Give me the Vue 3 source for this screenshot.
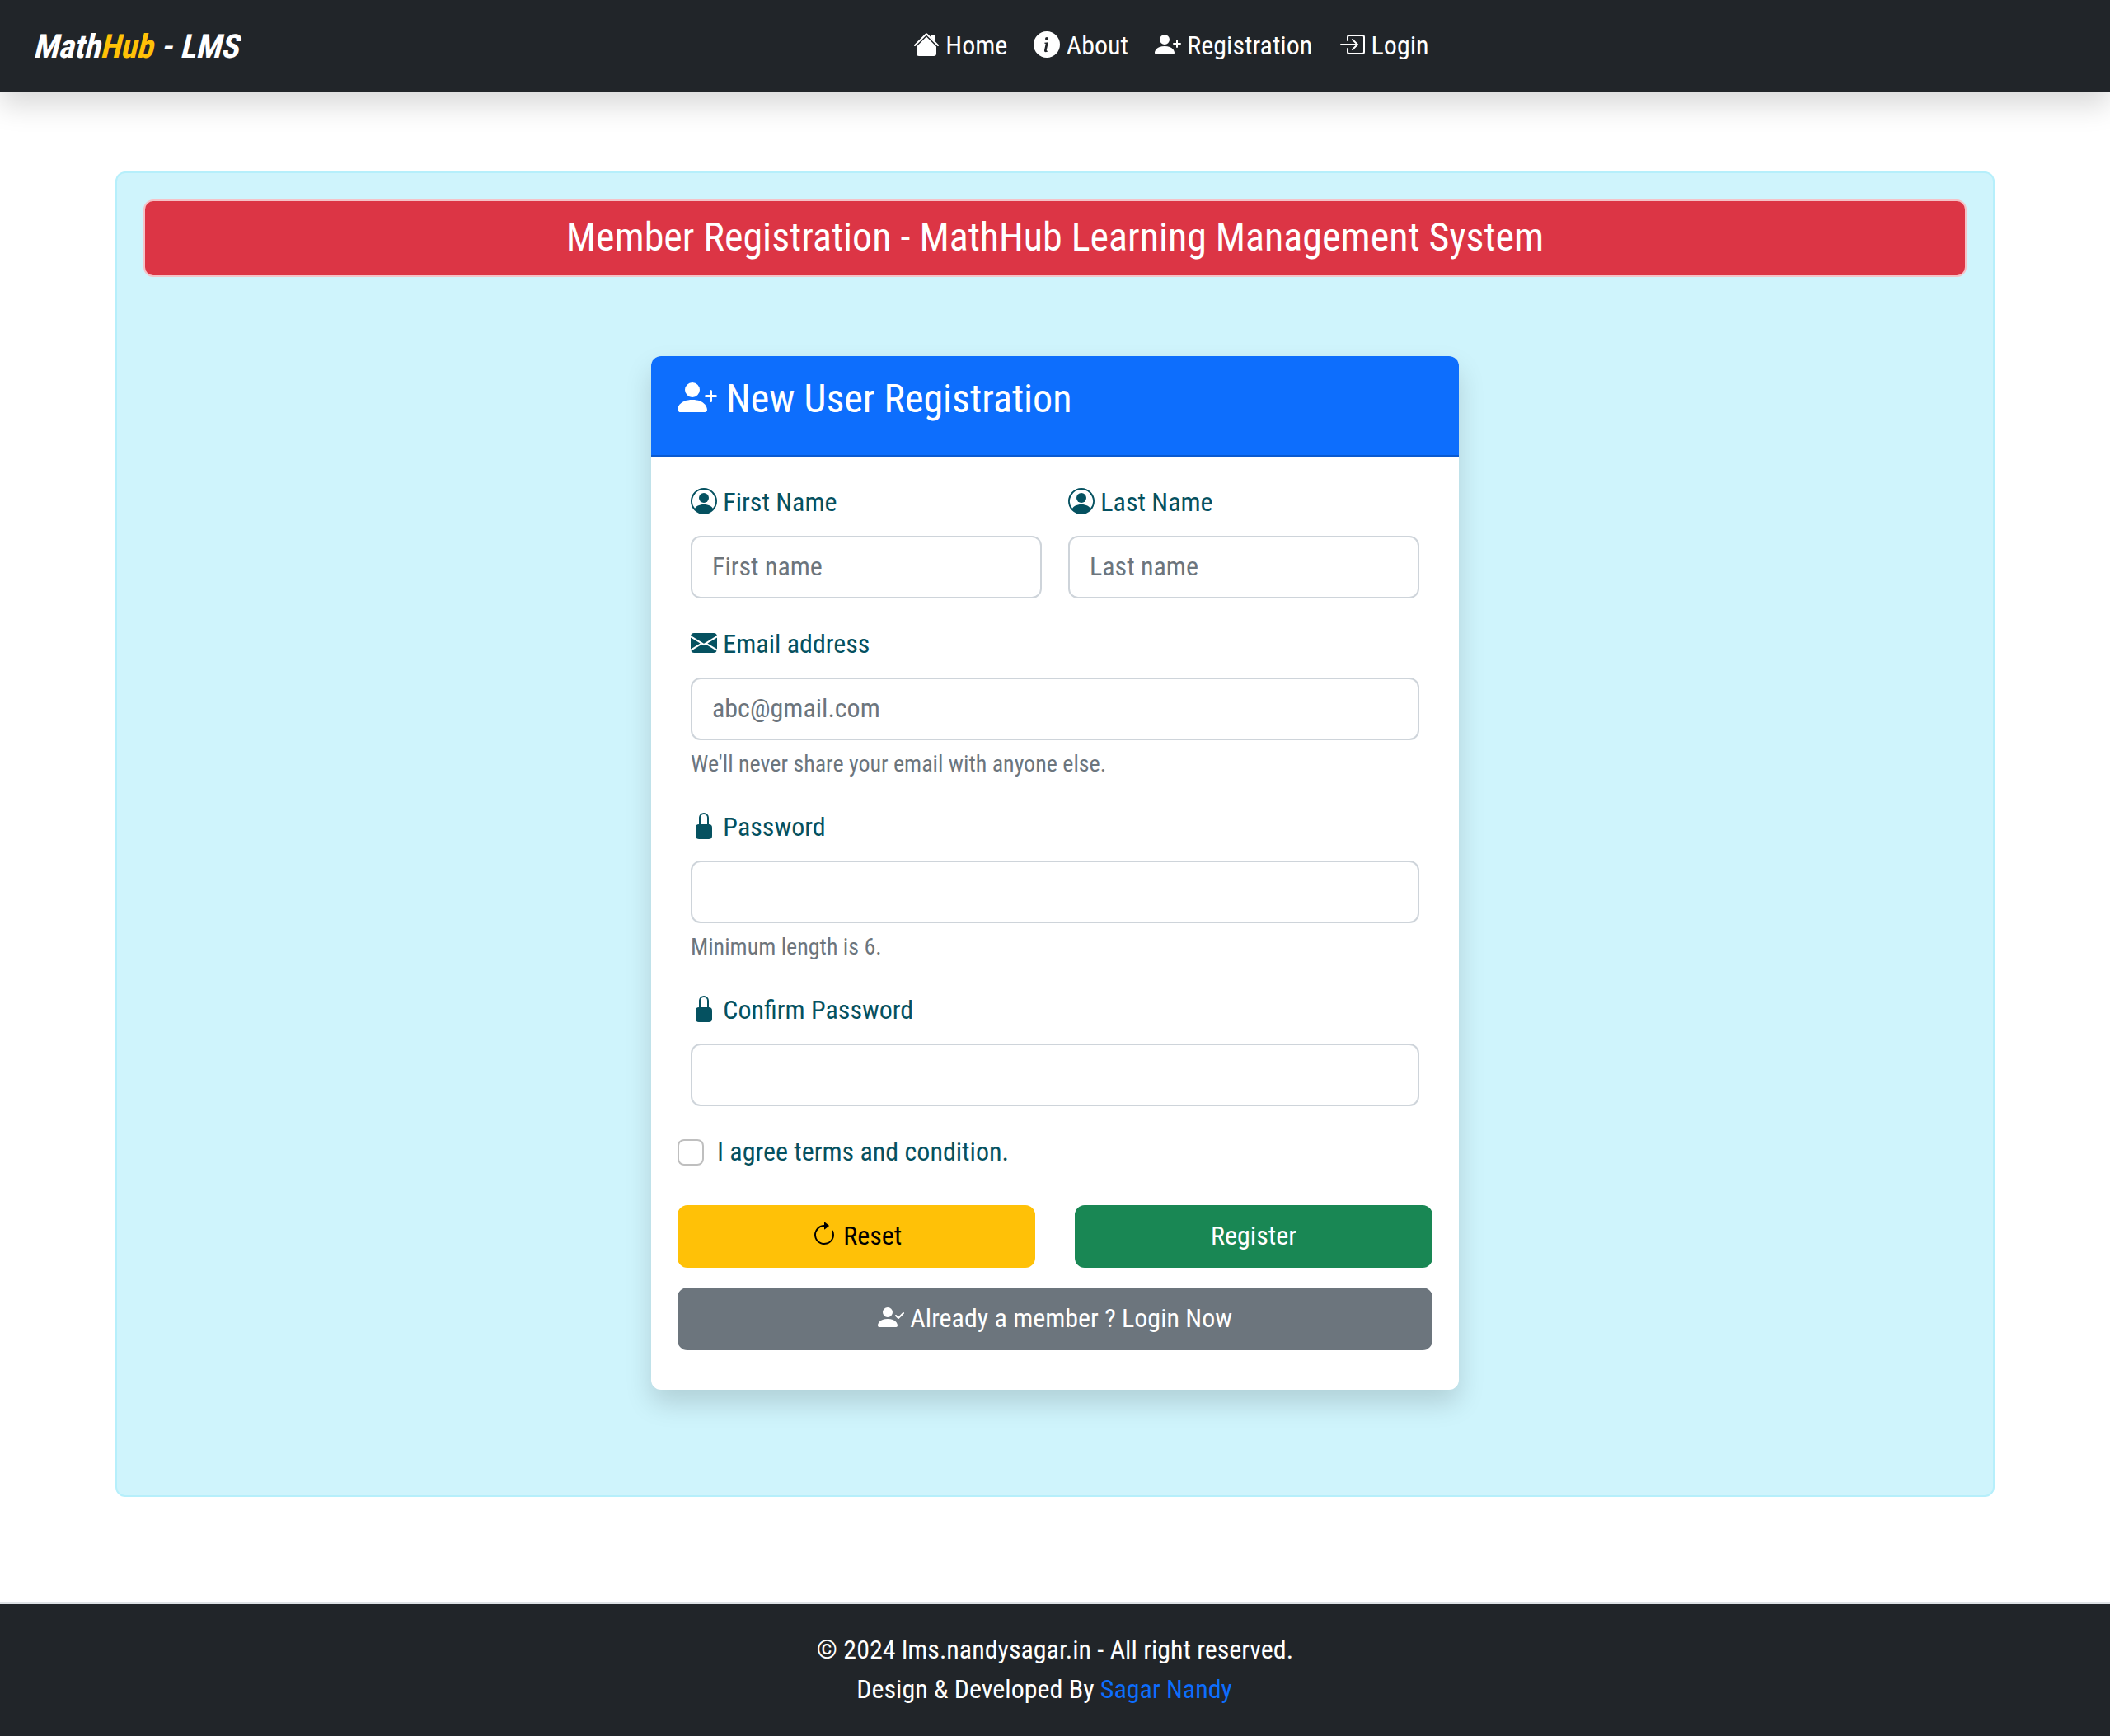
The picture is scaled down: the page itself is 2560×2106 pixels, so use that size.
<script setup>
import { h } from 'vue'

const person = 'M1 14s-1 0-1-1 1-4 6-4 6 3 6 4-1 1-1 1H1zm5-6a3 3 0 1 0 0-6 3 3 0 0 0 0 6z'
const icons = {
  house: [
    'm8 3.293 6 6V13.5a1.5 1.5 0 0 1-1.5 1.5h-9A1.5 1.5 0 0 1 2 13.5V9.293l6-6zm5-.793V6l-2-2V2.5a.5.5 0 0 1 .5-.5h1a.5.5 0 0 1 .5.5z',
    'M7.293 1.5a1 1 0 0 1 1.414 0l6.647 6.646a.5.5 0 0 1-.708.708L8 2.207 1.354 8.854a.5.5 0 1 1-.708-.708L7.293 1.5z',
  ],
  info: [
    'M8 16A8 8 0 1 0 8 0a8 8 0 0 0 0 16zm.93-9.412-1 4.705c-.07.34.029.533.304.533.194 0 .487-.07.686-.246l-.088.416c-.287.346-.92.598-1.465.598-.703 0-1.002-.422-.808-1.319l.738-3.468c.064-.293.006-.399-.287-.47l-.451-.081.082-.381 2.29-.287zM8 5.5a1 1 0 1 1 0-2 1 1 0 0 1 0 2z',
  ],
  personPlus: [
    person,
    'M13.5 5a.5.5 0 0 1 .5.5V7h1.5a.5.5 0 0 1 0 1H14v1.5a.5.5 0 0 1-1 0V8h-1.5a.5.5 0 0 1 0-1H13V5.5a.5.5 0 0 1 .5-.5z',
  ],
  personCheck: [
    person,
    'M15.854 5.146a.5.5 0 0 1 0 .708l-3 3a.5.5 0 0 1-.708 0l-1.5-1.5a.5.5 0 0 1 .708-.708L12.5 7.793l2.646-2.647a.5.5 0 0 1 .708 0z',
  ],
  boxArrow: [
    'M6 3.5a.5.5 0 0 1 .5-.5h8a.5.5 0 0 1 .5.5v9a.5.5 0 0 1-.5.5h-8a.5.5 0 0 1-.5-.5v-2a.5.5 0 0 0-1 0v2A1.5 1.5 0 0 0 6.5 14h8a1.5 1.5 0 0 0 1.5-1.5v-9A1.5 1.5 0 0 0 14.5 2h-8A1.5 1.5 0 0 0 5 3.5v2a.5.5 0 0 0 1 0v-2z',
    'M11.854 8.354a.5.5 0 0 0 0-.708l-3-3a.5.5 0 1 0-.708.708L10.293 7.5H1.5a.5.5 0 0 0 0 1h8.793l-2.147 2.146a.5.5 0 0 0 .708.708l3-3z',
  ],
  personCircle: [
    'M11 6a3 3 0 1 1-6 0 3 3 0 0 1 6 0z',
    'M0 8a8 8 0 1 1 16 0A8 8 0 0 1 0 8zm8-7a7 7 0 0 0-5.468 11.37C3.242 11.226 4.805 10 8 10s4.757 1.225 5.468 2.37A7 7 0 0 0 8 1z',
  ],
  envelope: [
    'M.05 3.555A2 2 0 0 1 2 2h12a2 2 0 0 1 1.95 1.555L8 8.414.05 3.555zM0 4.697v7.104l5.803-3.558L0 4.697zM6.761 8.83l-6.57 4.027A2 2 0 0 0 2 14h12a2 2 0 0 0 1.808-1.144l-6.57-4.027L8 9.586l-1.239-.757zm3.436-.586L16 11.801V4.697l-5.803 3.546z',
  ],
  lock: [
    'M8 1a2 2 0 0 1 2 2v4H6V3a2 2 0 0 1 2-2zm3 6V3a3 3 0 0 0-6 0v4a2 2 0 0 0-2 2v5a2 2 0 0 0 2 2h6a2 2 0 0 0 2-2V9a2 2 0 0 0-2-2z',
  ],
  clockwise: [
    'M8 3a5 5 0 1 0 4.546 2.914.5.5 0 0 1 .908-.417A6 6 0 1 1 8 2v1z',
    'M8 4.466V.534a.25.25 0 0 1 .41-.192l2.36 1.966c.12.1.12.284 0 .384L8.41 4.658A.25.25 0 0 1 8 4.466z',
  ],
}

const Icon = (props) =>
  h(
    'svg',
    { class: 'icon', viewBox: '0 0 16 16', fill: 'currentColor', 'aria-hidden': 'true' },
    icons[props.name].map((d) => h('path', { d, 'fill-rule': 'evenodd' })),
  )
Icon.props = ['name']

const links = [
  { icon: 'house', text: 'Home' },
  { icon: 'info', text: 'About' },
  { icon: 'personPlus', text: 'Registration' },
  { icon: 'boxArrow', text: 'Login' },
]

const fields = [
  { id: 'first', icon: 'personCircle', label: 'First Name', type: 'text', placeholder: 'First name', half: true },
  { id: 'last', icon: 'personCircle', label: 'Last Name', type: 'text', placeholder: 'Last name', half: true },
  { id: 'email', icon: 'envelope', label: 'Email address', type: 'email', placeholder: 'abc@gmail.com', help: "We'll never share your email with anyone else." },
  { id: 'password', icon: 'lock', label: 'Password', type: 'password', help: 'Minimum length is 6.' },
  { id: 'confirm', icon: 'lock', label: 'Confirm Password', type: 'password' },
]
</script>

<template>
  <div class="page">
    <header class="navbar">
      <a class="brand">Math<span class="accent">Hub</span> - LMS</a>
      <nav class="links">
        <a v-for="link in links" :key="link.text" class="link"><Icon :name="link.icon" />&#32;{{ link.text }}</a>
      </nav>
    </header>

    <main class="panel">
      <h1 class="banner">Member Registration - MathHub Learning Management System</h1>
      <section class="card">
        <div class="card-header">
          <h2 class="card-title"><Icon name="personPlus" />&#32;New User Registration</h2>
        </div>
        <form class="card-body" @submit.prevent>
          <div class="fields">
            <div v-for="f in fields" :key="f.id" class="field" :class="{ half: f.half }">
              <label class="label" :for="f.id"><Icon :name="f.icon" />&#32;{{ f.label }}</label>
              <input :id="f.id" class="input" :type="f.type" :placeholder="f.placeholder" />
              <div v-if="f.help" class="help">{{ f.help }}</div>
            </div>
          </div>
          <label class="agree"><input class="check" type="checkbox" /><span class="agree-text">I agree terms and condition.</span></label>
          <div class="actions">
            <button class="btn warning" type="reset"><Icon name="clockwise" />&#32;Reset</button>
            <button class="btn success" type="submit">Register</button>
            <button class="btn secondary" type="button"><Icon name="personCheck" />&#32;Already a member ? Login Now</button>
          </div>
        </form>
      </section>
    </main>

    <footer class="footer">
      <div>© 2024 lms.nandysagar.in - All right reserved.</div>
      <div class="credit">Design &amp; Developed By <a class="author">Sagar Nandy</a></div>
    </footer>
  </div>
</template>

<style>
body {
  margin: 0;
  background: #fff;
}
</style>

<style scoped>
.page,
.page * {
  box-sizing: border-box;
}
.page {
  font-family: 'Roboto Condensed', Roboto, sans-serif;
  font-stretch: 75%;
  font-size: 32px;
  line-height: 48px;
  color: #212529;
}
.icon {
  display: inline-block;
  width: 1em;
  height: 1em;
  vertical-align: -0.125em;
}
.navbar {
  display: flex;
  align-items: center;
  height: 112px;
  padding: 0 40px;
  background: #212529;
  box-shadow: 0 16px 32px rgba(0, 0, 0, 0.15);
}
/* The slant is a skew of the upright bold, pivoting on the baseline. */
.brand {
  flex: none;
  width: 1068px;
  padding-top: 2px;
  font-size: 40px;
  font-weight: 700;
  line-height: 60px;
  color: #fff;
  transform: skewX(-14deg);
  transform-origin: 0 45px;
}
.accent {
  color: #ffc107;
}
.links {
  display: flex;
  gap: 32px;
}
.link {
  padding-bottom: 2px;
  color: #fff;
  line-height: 46px;
  white-space: nowrap;
}
.panel {
  margin: 96px 140px 128px;
  padding: 32px 32px 128px;
  border: 2px solid #b6effb;
  border-radius: 12px;
  background: #cff4fc;
}
.banner {
  margin: 0 0 96px;
  padding: 16px 16px 18px;
  border: 2px solid #f5c2c7;
  border-radius: 12px;
  background: #dc3545;
  color: #fff;
  font-size: 48px;
  font-weight: 400;
  line-height: 56px;
  text-align: center;
}
.card {
  width: 980px;
  margin: 0 auto;
  border-radius: 12px;
  background: #fff;
  box-shadow: 0 16px 32px rgba(0, 0, 0, 0.15);
}
.card-header {
  height: 122px;
  padding: 24px 32px;
  border-bottom: 2px solid rgba(0, 0, 0, 0.176);
  border-radius: 12px 12px 0 0;
  background: #0d6efd;
}
.card-title {
  margin: 0;
  color: #fff;
  font-size: 48px;
  font-weight: 400;
  line-height: 55.6px;
}
.card-body {
  padding: 32px 32px 48px;
}
.fields {
  display: grid;
  grid-template-columns: 1fr 1fr;
  gap: 32px;
  padding: 0 16px;
}
.field {
  grid-column: span 2;
}
.field.half {
  grid-column: span 1;
}
.label {
  display: block;
  height: 48px;
  margin-bottom: 16px;
  color: #055160;
  line-height: 46px;
}
.input {
  display: block;
  width: 100%;
  height: 76px;
  padding: 11px 24px 13px;
  border: 2px solid #ced4da;
  border-radius: 12px;
  outline: none;
  background: #fff;
  color: #212529;
  font: inherit;
  font-stretch: inherit;
}
.input::placeholder {
  color: #6c757d;
  opacity: 1;
}
.help {
  margin-top: 8px;
  color: #6c757d;
  font-size: 28px;
  line-height: 42px;
}
.agree {
  display: flex;
  align-items: center;
  gap: 16px;
  margin: 32px 0 40px;
  color: #055160;
}
.agree-text {
  padding-bottom: 2px;
  line-height: 46px;
}
.check {
  appearance: none;
  width: 32px;
  height: 32px;
  margin: 0;
  border: 2px solid rgba(0, 0, 0, 0.25);
  border-radius: 8px;
  background: #fff;
}
.actions {
  display: grid;
  grid-template-columns: 1fr 1fr;
  gap: 24px 48px;
}
.btn {
  height: 76px;
  padding: 12px 24px 14px;
  border: 2px solid;
  border-radius: 12px;
  font: inherit;
  line-height: 46px;
  text-align: center;
}
.warning {
  border-color: #ffc107;
  background: #ffc107;
  color: #000;
}
.success {
  border-color: #198754;
  background: #198754;
  color: #fff;
}
.secondary {
  grid-column: span 2;
  border-color: #6c757d;
  background: #6c757d;
  color: #fff;
}
.footer {
  padding: 31px 0 33px;
  border-top: 2px solid #dee2e6;
  background: #212529;
  color: #fff;
  text-align: center;
}
.credit {
  padding-right: 26px;
}
.author {
  color: #0d6efd;
}
</style>
